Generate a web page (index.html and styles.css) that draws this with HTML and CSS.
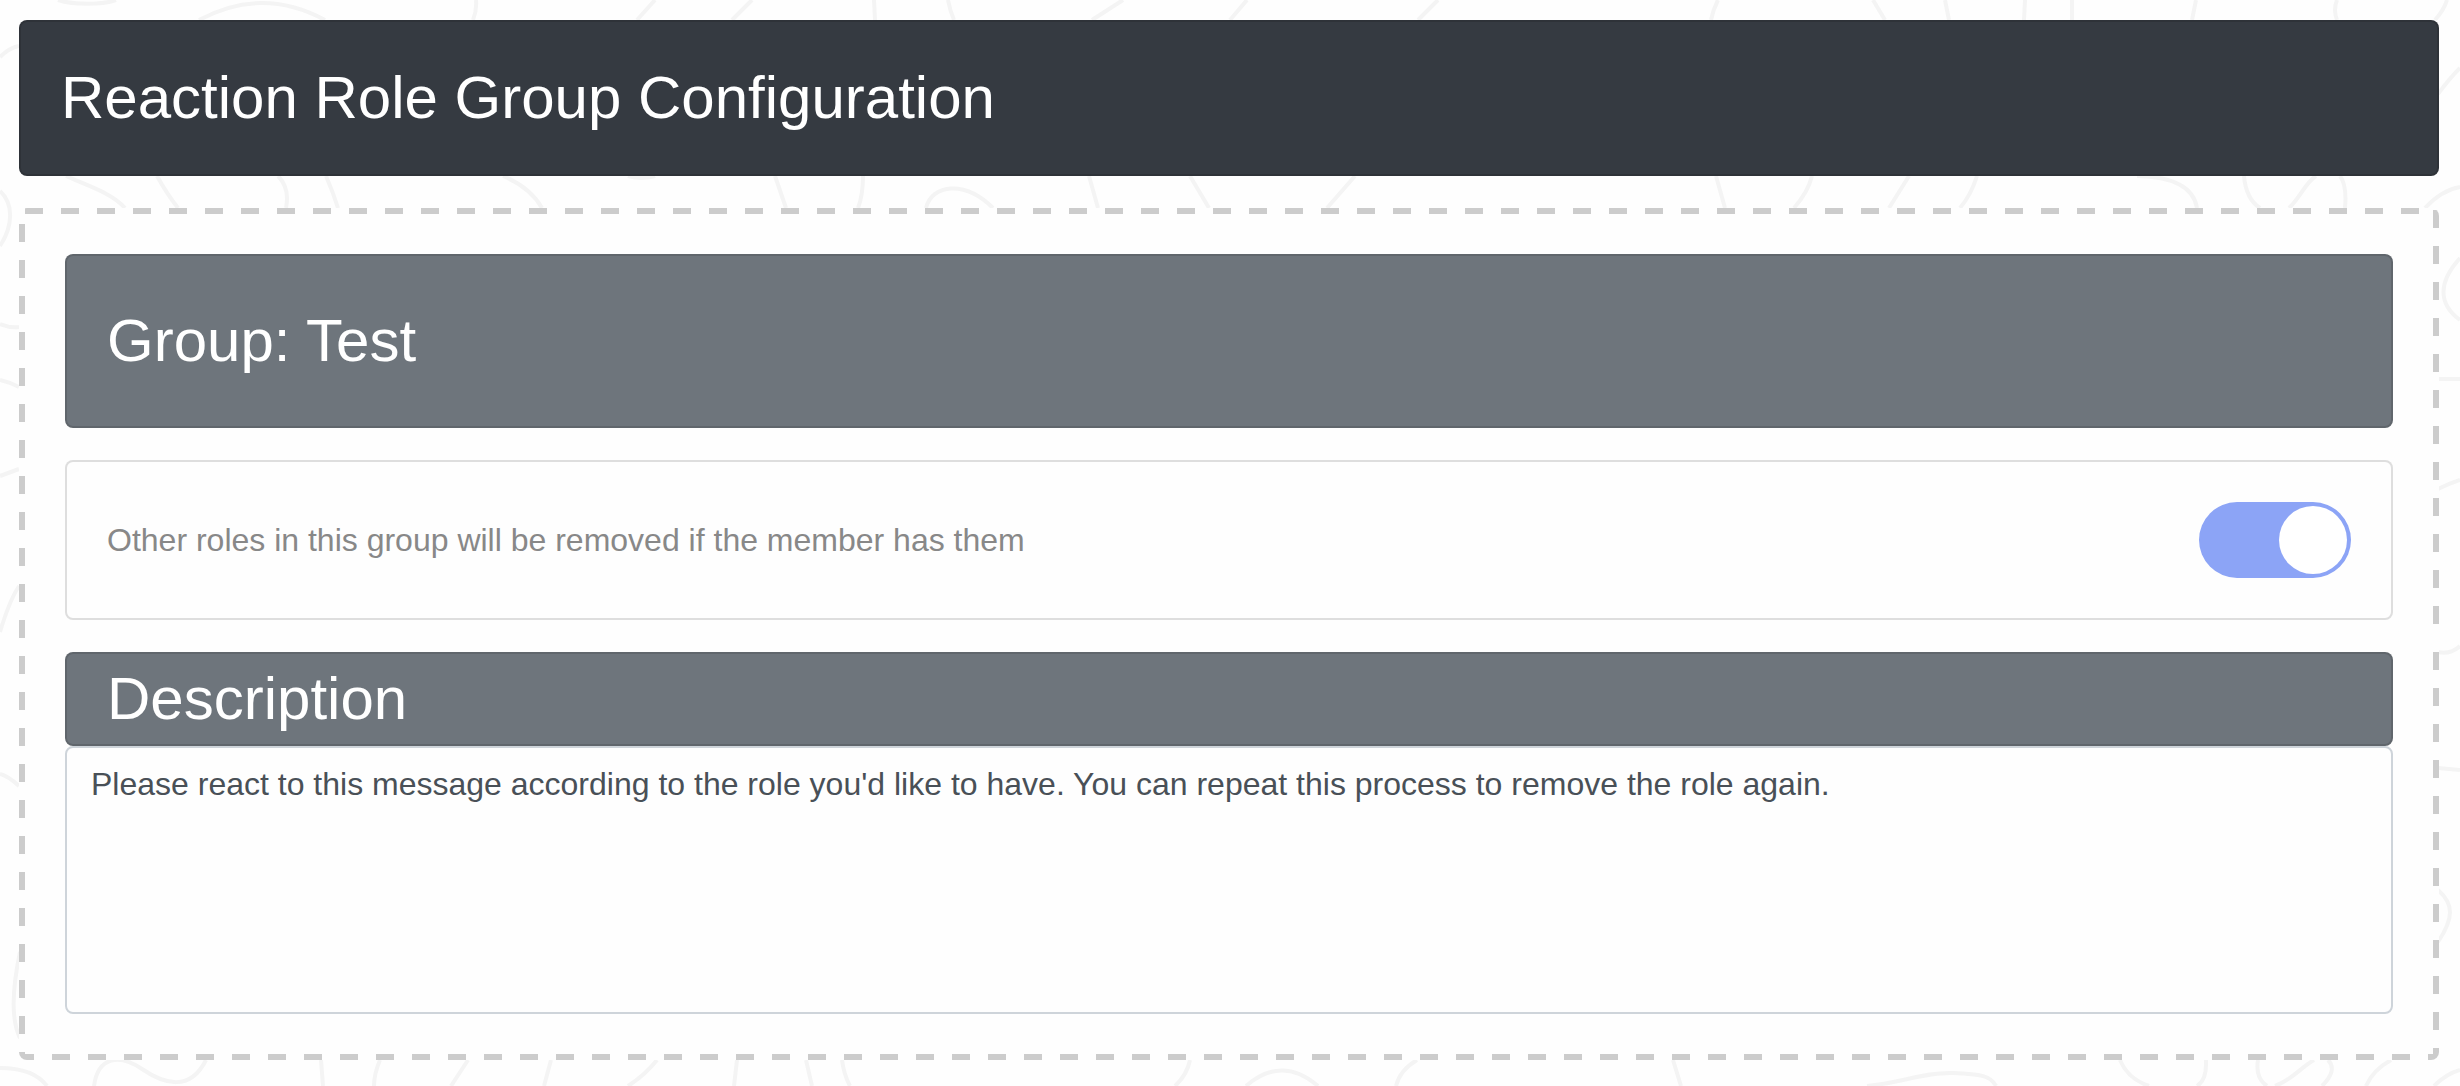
FILE: index.html
```
<!DOCTYPE html>
<html lang="en">
<head>
    <meta charset="UTF-8">
    <meta name="viewport" content="width=device-width, initial-scale=1.0">
    <title>Reaction Role Group Configuration</title>
    <link rel="stylesheet" href="styles.css">
</head>
<body>
    <!-- contour lines behind the page -->
    <svg class="backdrop" viewBox="0 0 2460 1086" preserveAspectRatio="xMidYMid slice" aria-hidden="true">
        <path d="M58 0C74 5 101 5 116 0M199 20Q262-14 325 20M476 0Q477 10 473 20M655 0L637 20M752 0L732 20M874 0L875 20M948 0Q950 11 954 20M1123 0L1092 20"/>
        <path d="M1247 0L1230 20M1438 0L1418 20M1718 0Q1713 10 1711 20M1873 0L1885 20M1945 0L1949 20M2025 0L2024 20M2072 0L2072 20M2196 0L2192 20M2337 0Q2333 10 2337 20M2447 0Q2444 10 2435 20"/>
        <path d="M66 176C88 186 112 193 125 208M157 176Q167 194 178 208M278 176Q290 188 286 208M326 176Q333 192 338 208M503 176Q530 187 542 208M628 176Q642 180 655 176M775 176L786 208M863 176Q863 195 858 208M926 208C932 184 965 180 993 208M1089 176L1098 208M1190 176L1209 208"/>
        <path d="M1355 176L1327 208M1716 176L1725 208M1812 176Q1808 192 1794 208M1909 176L1889 208M1977 176Q1971 195 1960 208M2137 176Q2192 177 2197 208M2244 176Q2246 199 2260 208M2316 176C2305 183 2300 198 2289 208M2340 176Q2347 185 2345 208M2425 208Q2442 190 2460 187"/>
        <path d="M0 57Q9 48 19 46M0 191C14 204 13 226 0 246M0 324Q10 328 19 327M0 380Q9 382 19 387M0 476L19 469M0 632C6 612 11 598 19 586M0 774Q8 776 19 786M20 952C12 990 11 1020 20 1038M0 1068C22 1068 38 1074 47 1086"/>
        <path d="M2438 94Q2450 78 2460 68M2460 258C2438 282 2438 304 2460 320M2438 379L2460 379M2438 489Q2448 484 2460 480M2438 652Q2450 655 2460 646M2438 768L2460 770M2438 890C2454 904 2454 918 2438 942M2434 1086Q2446 1074 2460 1070"/>
        <path d="M94 1086C98 1056 120 1054 142 1069S190 1092 206 1060M321 1060L323 1086M380 1060Q374 1074 374 1086M468 1060L451 1086M551 1060L544 1086M657 1060Q645 1075 628 1086M737 1060L734 1086M806 1060L812 1086M842 1060Q844 1075 850 1086M1190 1060Q1187 1075 1175 1086"/>
        <path d="M1246 1086Q1282 1055 1318 1086M1417 1060Q1400 1070 1396 1086M1673 1060L1681 1086M1867 1086C1900 1083 1925 1072 1953 1073S1991 1076 1996 1086M2120 1060Q2128 1079 2149 1086M2206 1060Q2207 1080 2197 1086M2258 1060Q2255 1078 2267 1086M2314 1060C2300 1068 2292 1080 2275 1086M2328 1060Q2338 1070 2322 1086M2391 1060Q2373 1070 2366 1086"/>
    </svg>

    <header class="card card-dark">
        <h1>Reaction Role Group Configuration</h1>
    </header>

    <main class="group">
        <div class="card card-secondary">
            <h2>Group: Test</h2>
        </div>

        <div class="card option">
            <label class="option-label" for="uniqueRole">Other roles in this group will be removed if the member has them</label>
            <input class="switch" type="checkbox" id="uniqueRole" checked>
        </div>

        <div class="description">
            <label class="card card-secondary card-slim" for="description">Description</label>
            <textarea class="form-control" id="description" rows="5">Please react to this message according to the role you'd like to have. You can repeat this process to remove the role again.</textarea>
        </div>
    </main>
</body>
</html>
```
FILE: styles.css
```
* {
    box-sizing: border-box;
}
body {
    position: relative;
    margin: 0;
    padding: 20px 21px 26px 19px;
    display: flex;
    flex-direction: column;
    gap: 32px;
    font-family: Helvetica, "Liberation Sans", Arial, sans-serif;
    font-size: 32px;
    line-height: 48px;
    color: #495057;
    background: #fefefe;
}
.backdrop {
    position: absolute;
    top: 0;
    left: 0;
    width: 100%;
    height: 100%;
    z-index: -1;
    fill: none;
    stroke: #f4f4f4;
    stroke-width: 4px;
}
h1,
h2 {
    margin: 0;
    font-size: 60px;
    font-weight: normal;
}
h1 {
    line-height: 72px;
}
h2 {
    line-height: 90px;
}
.card {
    padding: 40px;
    border: 2px solid rgba(0, 0, 0, 0.125);
    border-radius: 8px;
    background-color: #fefefe;
}
.card-dark {
    color: white;
    background-color: #353a41;
}
.card-secondary {
    color: white;
    background-color: #6e757c;
}
.card-slim {
    display: block;
    padding: 0 40px;
    font-size: 60px;
    line-height: 90px;
}

/* wide dashes: 18px on, 18px off on every side */
.group {
    display: flex;
    flex-direction: column;
    gap: 32px;
    padding: 40px;
    border: 6px solid transparent;
    border-radius: 8px;
    background-color: #fefefe;
    background-image:
        linear-gradient(90deg, #ccc 50%, transparent 50%),
        linear-gradient(90deg, #ccc 50%, transparent 50%),
        linear-gradient(180deg, #ccc 50%, transparent 50%),
        repeating-linear-gradient(180deg, #ccc 0 18px, transparent 18px 36px),
        repeating-linear-gradient(0deg, #ccc 0 12px, transparent 12px 30px, #ccc 30px 36px);
    background-origin: border-box;
    background-position: 6px 0, -3px 100%, 0 16px, right 0 top 2px, right 0 bottom 0;
    background-size: 36px 6px, 36px 6px, 6px 36px, 6px 50%, 6px 50%;
    background-repeat: repeat-x, repeat-x, repeat-y, no-repeat, no-repeat;
}
.option {
    display: flex;
    align-items: center;
    justify-content: space-between;
    gap: 40px;
}
.option-label {
    color: #888;
}
.switch {
    appearance: none;
    display: flex;
    flex-shrink: 0;
    width: 152px;
    height: 76px;
    margin: 0;
    padding: 4px;
    border-radius: 38px;
    background: #ccc;
    cursor: pointer;
}
.switch::before {
    content: "";
    width: 68px;
    height: 68px;
    border-radius: 50%;
    background: white;
}
.switch:checked {
    justify-content: flex-end;
    background: #8ca4f6;
}
.form-control {
    display: block;
    width: 100%;
    margin: 0;
    padding: 12px 24px;
    border: 2px solid #ced4da;
    border-radius: 8px;
    background: #fefefe;
    color: #495057;
    font: inherit;
    resize: none;
}
```
